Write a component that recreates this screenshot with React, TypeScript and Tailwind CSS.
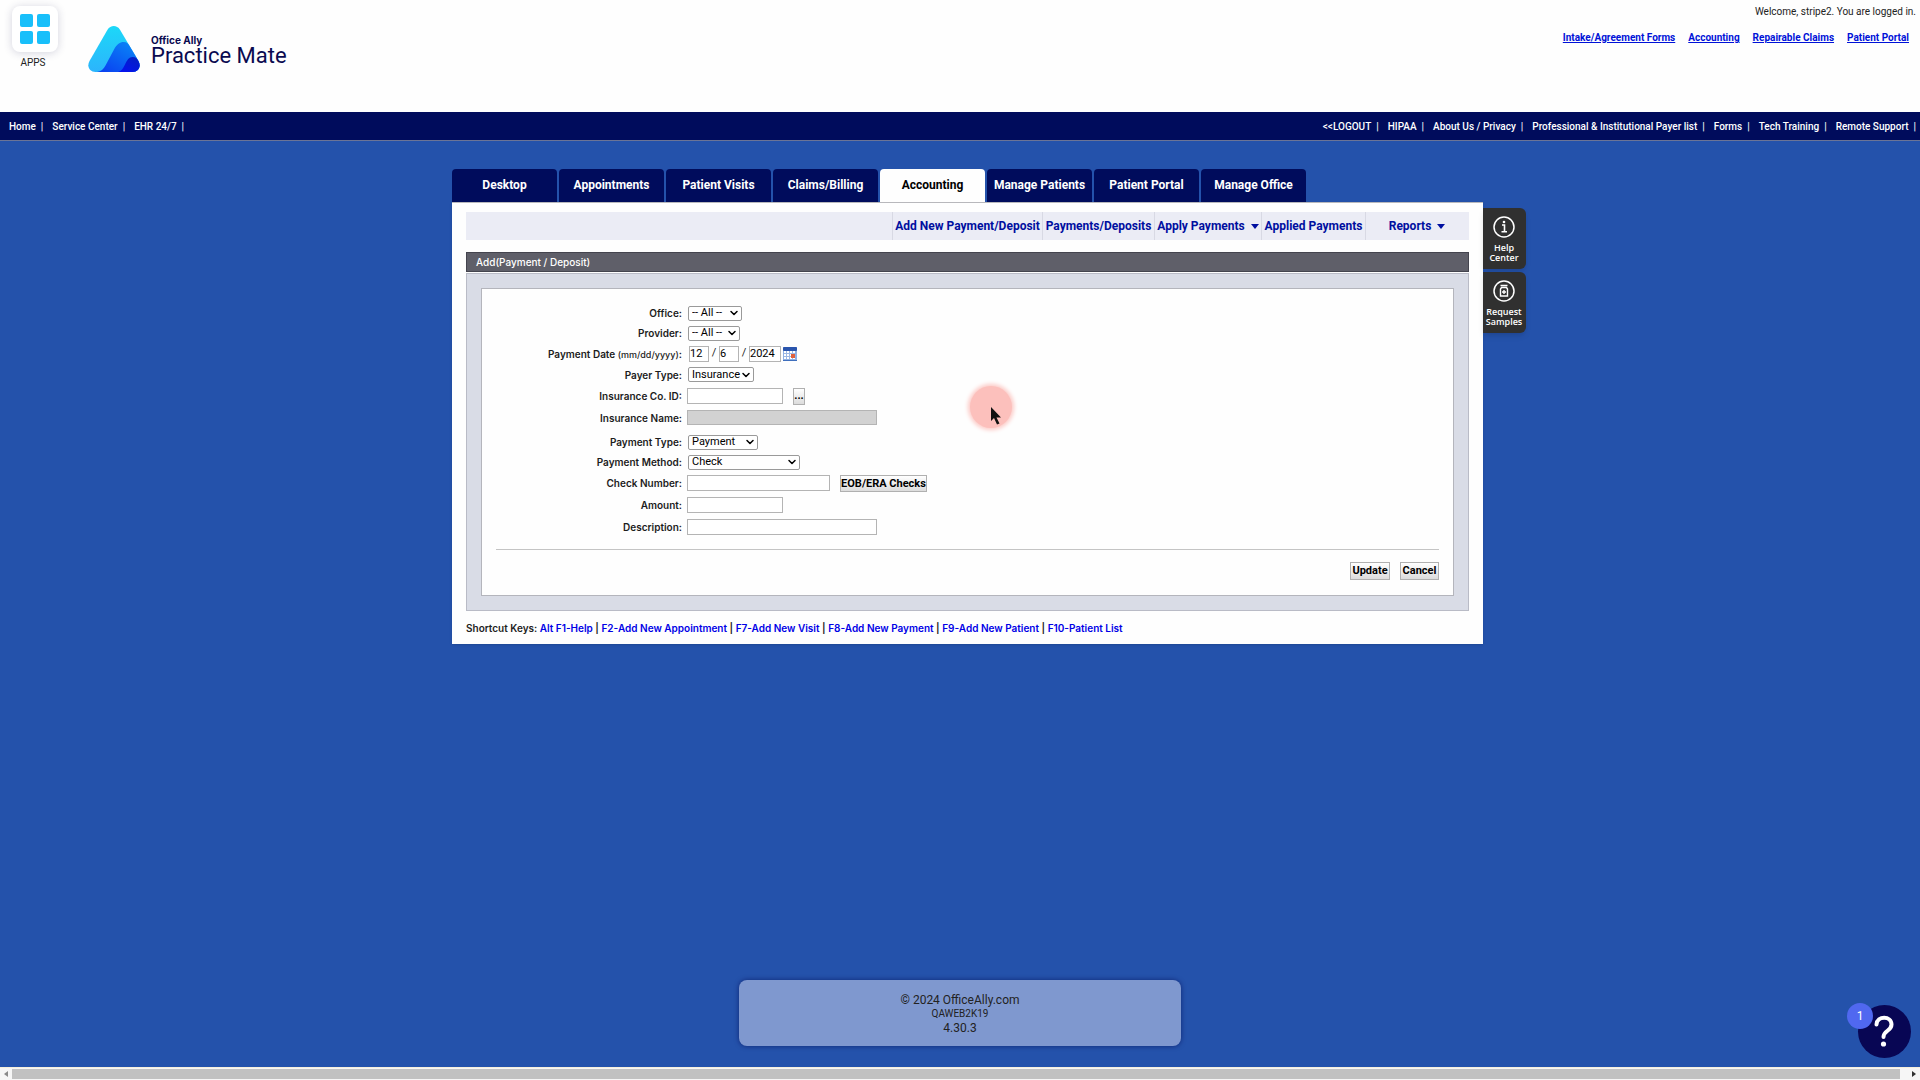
import type { ReactNode } from "react";
import { ChevronDown } from "lucide-react";

const leftLinks = ["Home", "Service Center", "EHR 24/7"];

const rightLinks = [
  "<<LOGOUT",
  "HIPAA",
  "About Us / Privacy",
  "Professional & Institutional Payer list",
  "Forms",
  "Tech Training",
  "Remote Support",
];

const accountLinks = [
  "Intake/Agreement Forms",
  "Accounting",
  "Repairable Claims",
  "Patient Portal",
];

const tabs = [
  "Desktop",
  "Appointments",
  "Patient Visits",
  "Claims/Billing",
  "Accounting",
  "Manage Patients",
  "Patient Portal",
  "Manage Office",
];

const subMenu = [
  { label: "Add New Payment/Deposit", width: "w-[150px]" },
  { label: "Payments/Deposits", width: "w-[112px]" },
  { label: "Apply Payments", width: "w-[107px]", arrow: true },
  { label: "Applied Payments", width: "w-[104px]" },
  { label: "Reports", width: "w-[103px]", arrow: true },
];

const shortcuts = [
  "Alt F1-Help",
  "F2-Add New Appointment",
  "F7-Add New Visit",
  "F8-Add New Payment",
  "F9-Add New Patient",
  "F10-Patient List",
];

const inputClass = "h-4 border border-[#b4b4b4] bg-white text-[11px] leading-3 text-black";
const buttonClass =
  "border border-[#b0b0b0] bg-linear-to-b from-white to-[#dcdcdc] text-[11px] font-bold text-black";

function Logo() {
  return (
    <svg width="52" height="46" viewBox="0 0 52 46">
      <defs>
        <linearGradient id="sky" x1="0" y1="0" x2="0" y2="1">
          <stop offset="0" stopColor="#1cd8f8" />
          <stop offset="1" stopColor="#2cb4fc" />
        </linearGradient>
        <linearGradient id="mid" x1="1" y1="0" x2="0" y2="1">
          <stop offset="0" stopColor="#0a92f8" />
          <stop offset="1" stopColor="#0a3cf0" />
        </linearGradient>
        <linearGradient id="deep" x1="1" y1="0" x2="0" y2="1">
          <stop offset="0" stopColor="#0424b8" />
          <stop offset="1" stopColor="#0410f4" />
        </linearGradient>
        <clipPath id="mark">
          <path d="M19.500 3.800C22.500 -1.200 29 -1.200 32 3.800L50.500 35C53.500 40.500 50.500 46 44.500 46H7.500C1.500 46 -1.500 40.500 1.500 35Z" />
        </clipPath>
      </defs>
      <g clipPath="url(#mark)">
        <rect width="52" height="46" fill="url(#sky)" />
        <path d="M9 46C13 45.500 15.500 43 17.500 39.500L26 23.500C29 18 32 16 35.500 16C39 16 41 18 43 21L58 46Z" fill="url(#mid)" />
        <path d="M30 46C33.500 45 35 42.500 37 38.500C39 34 41 31 44.500 31C48 31 49.500 33 51 35.500L58 46Z" fill="url(#deep)" />
      </g>
    </svg>
  );
}

function CalendarIcon() {
  return (
    <svg width="14" height="14" viewBox="0 0 14 14">
      <rect width="14" height="14" rx="1" fill="#8fb0e4" />
      <rect width="14" height="4" rx="1" fill="#2a55ad" />
      <path d="M1 4h11v8H1z" fill="#fff" />
      <path d="M3.500 4v8M6.500 4v8M9.500 4v8M1 6.500h11M1 9.500h11" stroke="#9db8e4" />
      <rect x="8" y="7" width="4" height="4" fill="#e0603c" />
      <path d="M0 13.500h14" stroke="#3f6fbd" />
    </svg>
  );
}

function Row({
  id,
  label,
  hint,
  height,
  children,
}: {
  id: string;
  label: string;
  hint?: string;
  height: string;
  children: ReactNode;
}) {
  return (
    <div className={`flex items-center ${height}`}>
      <label
        htmlFor={id}
        className="w-[200px] pt-px text-right font-[Inter,sans-serif] text-[10px] font-semibold text-[#1c1c1c]"
      >
        {label}
        {hint && <span className="text-[9px] font-medium"> {hint}</span>}:
      </label>
      <div className="ml-[5px] flex items-center">{children}</div>
    </div>
  );
}

function Select({ id, options, width }: { id: string; options: string[]; width: string }) {
  return (
    <span className={`relative ml-px flex h-[15px] items-center ${width}`}>
      <select
        id={id}
        className="h-full w-full appearance-none rounded-xs border border-[#9a9a9a] bg-white pl-[3px] text-[11px] leading-3 text-black"
      >
        {options.map((option) => (
          <option key={option}>{option}</option>
        ))}
      </select>
      <ChevronDown className="pointer-events-none absolute right-[2px] size-3 text-black" strokeWidth={3} />
    </span>
  );
}

function PaymentForm() {
  return (
    <form
      onSubmit={(e) => e.preventDefault()}
      className="border border-[#b4b5bc] bg-[#fefefe] px-[14px] pt-[14px] pb-[15px]"
    >
      <div className="border-b border-[#c4c4c4] pb-[11px]">
        <div className="-ml-[14px]">
          <Row id="office" label="Office" height="h-5">
            <Select id="office" options={["-- All --"]} width="w-[54px]" />
          </Row>
          <Row id="provider" label="Provider" height="h-5">
            <Select id="provider" options={["-- All --"]} width="w-[52px]" />
          </Row>
          <Row id="month" label="Payment Date" hint="(mm/dd/yyyy)" height="h-[21px]">
            <div className="ml-[2px] flex items-center text-[11px]">
              <input id="month" aria-label="Month" defaultValue="12" className={`${inputClass} w-5`} />
              <span className="w-[10px] text-center">/</span>
              <input aria-label="Day" defaultValue="6" className={`${inputClass} w-5`} />
              <span className="w-[10px] text-center">/</span>
              <input aria-label="Year" defaultValue="2024" className={`${inputClass} w-8`} />
              <button type="button" aria-label="Pick a date" className="ml-[2px]">
                <CalendarIcon />
              </button>
            </div>
          </Row>
          <Row id="payer" label="Payer Type" height="h-[21px]">
            <Select id="payer" options={["Insurance", "Patient"]} width="w-[66px]" />
          </Row>
          <Row id="insurance-id" label="Insurance Co. ID" height="h-[22px]">
            <input id="insurance-id" className={`${inputClass} w-24`} />
            <button type="button" className={`${buttonClass} ml-[10px] h-[17px] w-3 leading-3`}>
              ...
            </button>
          </Row>
          <Row id="insurance-name" label="Insurance Name" height="h-[21px]">
            <input
              id="insurance-name"
              readOnly
              className="h-[15px] w-[190px] border border-[#b4b4b4] bg-[#d2d2d2] text-[11px]"
            />
          </Row>
          <div className="mt-1">
            <Row id="payment-type" label="Payment Type" height="h-5">
              <Select id="payment-type" options={["Payment", "Deposit"]} width="w-[70px]" />
            </Row>
            <Row id="method" label="Payment Method" height="h-5">
              <Select id="method" options={["Check", "Cash"]} width="w-28" />
            </Row>
            <Row id="check-number" label="Check Number" height="h-[22px]">
              <input id="check-number" className={`${inputClass} w-[143px]`} />
              <button type="button" className={`${buttonClass} ml-[10px] h-[17px] w-[87px] leading-[15px]`}>
                EOB/ERA Checks
              </button>
            </Row>
            <Row id="amount" label="Amount" height="h-[22px]">
              <input id="amount" className={`${inputClass} w-24`} />
            </Row>
            <Row id="description" label="Description" height="h-[22px]">
              <input id="description" className={`${inputClass} w-[190px]`} />
            </Row>
          </div>
        </div>
      </div>
      <div className="mt-3 flex justify-end gap-[10px]">
        <button type="submit" className={`${buttonClass} h-[18px] w-10`}>
          Update
        </button>
        <button type="button" className={`${buttonClass} h-[18px] w-[39px]`}>
          Cancel
        </button>
      </div>
    </form>
  );
}

function SideButton({ lines, children }: { lines: string[]; children: ReactNode }) {
  return (
    <button
      type="button"
      className="flex h-[61px] w-[43px] flex-col items-center justify-center gap-[5px] rounded-r-md bg-[#303030] pt-px pr-px font-['Open_Sans',sans-serif] text-[9px] leading-[10px] font-semibold text-white shadow-md"
    >
      <svg width="22" height="22" viewBox="0 0 22 22" fill="none" stroke="#fff">
        <circle cx="11" cy="11" r="10" strokeWidth="1.500" />
        {children}
      </svg>
      <span>
        {lines[0]}
        <br />
        {lines[1]}
      </span>
    </button>
  );
}

export default function App() {
  return (
    <div className="flex min-h-screen flex-col bg-[#2452ab] font-[Roboto,'Liberation_Sans',sans-serif] text-[11px] text-[#222]">
      <header className="flex h-28 items-start bg-[#fefefe]">
        <div className="ml-3 flex w-[46px] flex-col items-center pt-[6px]">
          <button
            type="button"
            aria-label="Apps"
            className="grid size-[46px] grid-cols-2 place-content-center gap-1 rounded-lg bg-white px-2 shadow-[0_1px_8px_rgba(40,40,90,0.2)]"
          >
            {[0, 1, 2, 3].map((tile) => (
              <span key={tile} className="size-[13px] rounded-[2px] bg-[#18bffa]" />
            ))}
          </button>
          <span className="mt-1 mr-1 text-[10px] leading-[14px]">APPS</span>
        </div>
        <a href="#" className="mt-[26px] ml-[30px] flex text-[#0a0a50]">
          <Logo />
          <span className="ml-[11px] flex flex-col pt-2">
            <span className="font-[Inter,sans-serif] text-[10px] leading-3 font-bold">Office Ally</span>
            <span className="text-[22px] leading-5">Practice Mate</span>
          </span>
        </a>
        <div className="ml-auto flex flex-col items-end pt-[5px] pr-1">
          <p className="text-[10px] leading-[14px]">Welcome, stripe2. You are logged in.</p>
          <nav className="mt-3 mr-[7px] flex gap-[13px] text-[10px] leading-[14px] font-bold text-[#0012d8]">
            {accountLinks.map((link) => (
              <a key={link} href="#" className="underline">
                {link}
              </a>
            ))}
          </nav>
        </div>
      </header>

      <nav className="flex h-[29px] items-center justify-between border-b border-[#6b7496] bg-[#000c5c] pr-1 pl-[9px] text-[10px] font-medium text-white">
        <div className="flex gap-[9px]">
          {leftLinks.map((link) => (
            <span key={link} className="flex gap-[5px]">
              <a href="#">{link}</a>
              <span>|</span>
            </span>
          ))}
        </div>
        <div className="flex gap-[9px]">
          {rightLinks.map((link) => (
            <span key={link} className="flex gap-[5px]">
              <a href="#">{link}</a>
              <span>|</span>
            </span>
          ))}
        </div>
      </nav>

      <main className="flex flex-1 items-start justify-center pt-7 pl-[58px]">
        <div className="w-full max-w-[1031px]">
          <nav className="flex gap-[2px]">
            {tabs.map((tab) => (
              <a
                key={tab}
                href="#"
                className={`flex h-[33px] w-[105px] items-center justify-center rounded-t-sm pb-[2px] text-[12px] font-bold ${
                  tab === "Accounting" ? "bg-[#fefefe] text-black" : "bg-[#000c5c] text-white"
                }`}
              >
                {tab}
              </a>
            ))}
          </nav>
          <section className="border-t border-[#b8b8bc] bg-[#fefefe] px-[14px] pt-[9px] pb-2 shadow-sm">
            <nav className="flex h-7 justify-end bg-[#ebecf5] pr-px text-[12px] font-bold text-[#000fa0]">
              {subMenu.map((item) => (
                <a
                  key={item.label}
                  href="#"
                  className={`flex items-center justify-center gap-[6px] border-l border-[#d8d9e4] whitespace-nowrap ${item.width}`}
                >
                  {item.label}
                  {item.arrow && (
                    <svg width="8" height="5" viewBox="0 0 8 5" fill="currentColor">
                      <path d="M0 0h8L4 5z" />
                    </svg>
                  )}
                </a>
              ))}
            </nav>
            <h1 className="mt-3 h-5 border border-[#44444e] bg-[#5f5f69] pl-[9px] font-[Inter,sans-serif] text-[10px] leading-[18px] font-medium text-white">
              Add(Payment / Deposit)
            </h1>
            <div className="mt-px border border-[#b9bbc6] bg-[#d9dce6] p-[14px]">
              <PaymentForm />
            </div>
            <p className="mt-[10px] font-[Inter,sans-serif] text-[10px] leading-[15px] font-semibold">
              Shortcut Keys:{" "}
              {shortcuts.map((item, index) => (
                <span key={item}>
                  {index > 0 && " | "}
                  <a href="#" className="text-[#0000e6]">
                    {item}
                  </a>
                </span>
              ))}
            </p>
          </section>
        </div>
        <aside className="mt-[39px] flex flex-col gap-[3px]">
          <SideButton lines={["Help", "Center"]}>
            <circle cx="11" cy="6" r="1.300" fill="#fff" stroke="none" />
            <path d="M9 9h2.500v6.500M8.500 15.800h5.500" strokeWidth="1.600" />
          </SideButton>
          <SideButton lines={["Request", "Samples"]}>
            <path d="M7.500 5.500h7M8.500 7.500h5l1 1.500v7h-7V9z" strokeWidth="1.400" />
            <path d="M11 10v4M9 12h4" strokeWidth="1.400" />
          </SideButton>
        </aside>
      </main>

      <footer className="mx-auto mb-[21px] flex h-[66px] w-full max-w-[442px] flex-col items-center rounded-lg bg-[#7f98cf] pt-3 shadow-[0_0_5px_rgba(0,10,80,0.6)]">
        <p className="text-[12px] leading-4">© 2024 OfficeAlly.com</p>
        <p className="text-[10px] leading-3">QAWEB2K19</p>
        <p className="text-[12px] leading-4">4.30.3</p>
      </footer>

      <div className="flex h-[13px] items-center border-t border-[#f5efdc] bg-[#f6f6f6] text-[#505050]">
        <svg width="12" height="8" viewBox="0 0 12 8" fill="#8a8a8a">
          <path d="M8 1v6L4 4z" />
        </svg>
        <div className="h-[10px] flex-1 bg-[#c1c1c1]" />
        <svg width="20" height="8" viewBox="0 0 20 8" fill="#303030">
          <path d="M12 1v6l4-3z" />
        </svg>
      </div>

      {/* chat launcher */}
      <button
        type="button"
        aria-label="Help"
        className="fixed right-[9px] bottom-[22px] size-[53px] rounded-full bg-[#080654]"
      >
        <svg width="53" height="53" viewBox="0 0 53 53" fill="none" stroke="#fff" strokeWidth="4" strokeLinecap="round">
          <path d="M18.500 19.500C19 10.500 33.500 10.500 33.500 19.500C33.500 26 25.500 25.500 25.500 32" />
          <circle cx="25.500" cy="39" r="2.600" fill="#fff" stroke="none" />
        </svg>
        <span className="absolute -top-[2px] -left-[11px] flex size-[26px] items-center justify-center rounded-full bg-[#5068f0] text-[12px] text-white">
          1
        </span>
      </button>

      {/* pointer with click halo */}
      <div className="pointer-events-none absolute top-[386px] left-[970px] size-[42px] rounded-full bg-[#fcc0bc] shadow-[0_0_4px_2px_#fcc8c4]">
        <svg className="absolute top-[21px] left-[21px]" width="11" height="18" viewBox="0 0 11 18">
          <path d="M0 0v14l3-3 3 6.500 2.500-1-3-6H10z" fill="#111" />
        </svg>
      </div>
    </div>
  );
}
